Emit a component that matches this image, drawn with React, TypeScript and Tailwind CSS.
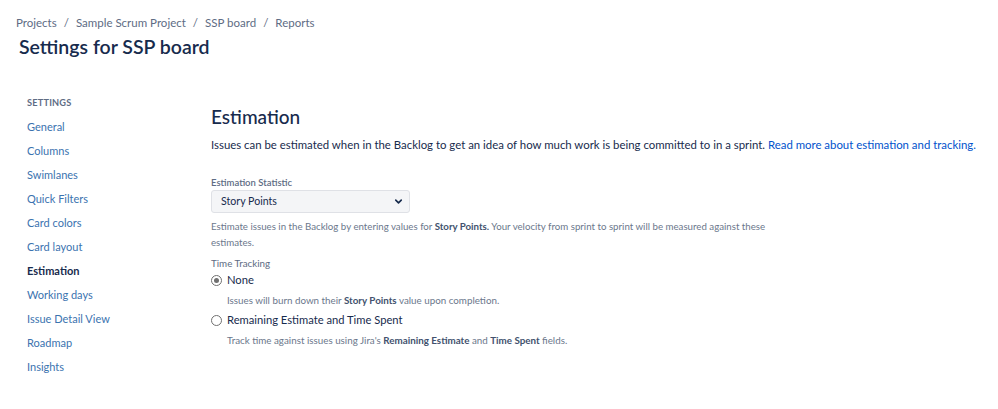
import { ChevronDown } from 'lucide-react';

const navItems = [
  'General',
  'Columns',
  'Swimlanes',
  'Quick Filters',
  'Card colors',
  'Card layout',
  'Estimation',
  'Working days',
  'Issue Detail View',
  'Roadmap',
  'Insights',
];

function Radio({ checked }: { checked?: boolean }) {
  return (
    <span className="w-[11px] h-[11px] rounded-full border border-[#707070] bg-white flex items-center justify-center shrink-0">
      {checked && <span className="w-[5px] h-[5px] rounded-full bg-[#707070]" />}
    </span>
  );
}

export default function App() {
  return (
    <div className="w-[998px] h-[409px] bg-white text-[#172b4d] overflow-hidden" style={{ fontFamily: 'Lato, "Noto Sans", sans-serif' }}>
      {/* Header */}
      <div className="pl-[16px] pt-[15px]">
        <div className="flex items-center text-[11.5px] leading-[16px] text-[#5e6c84]">
          <span>Projects</span>
          <span className="mx-[7px]">/</span>
          <span>Sample Scrum Project</span>
          <span className="mx-[7px]">/</span>
          <span>SSP board</span>
          <span className="mx-[7px]">/</span>
          <span>Reports</span>
        </div>
        <h1 className="pl-[3px] mt-[4px] text-[19.5px] leading-[24px] font-semibold text-[#172b4d]">Settings for SSP board</h1>
      </div>

      <div className="flex mt-[36px]">
        {/* Sidebar */}
        <div className="w-[211px] pl-[27px] shrink-0">
          <div className="text-[9.2px] leading-[16px] font-bold text-[#5e6c84] tracking-[0.2px]">SETTINGS</div>
          <ul className="mt-[4px]">
            {navItems.map((item) => (
              <li
                key={item}
                className={
                  item === 'Estimation'
                    ? 'h-[24px] flex items-center text-[11px] font-bold text-[#172b4d]'
                    : 'h-[24px] flex items-center text-[11px] text-[#3b73af]'
                }
              >
                {item}
              </li>
            ))}
          </ul>
        </div>

        {/* Main */}
        <div className="flex-1 pt-[10px]">
          <h2 className="text-[19px] leading-[24px] font-medium text-[#172b4d]">Estimation</h2>
          <p className="mt-[8px] text-[11.4px] leading-[16px] text-[#172b4d] whitespace-nowrap">
            Issues can be estimated when in the Backlog to get an idea of how much work is being committed to in a sprint.{' '}
            <span className="text-[#0052cc]">Read more about estimation and tracking.</span>
          </p>

          <div className="mt-[23px] text-[9.5px] leading-[14px] text-[#5e6c84] font-semibold">Estimation Statistic</div>
          <div className="w-[199px] h-[23px] rounded-[3px] border border-[#dfe1e6] bg-[#f4f5f7] flex items-center justify-between pl-[9px] pr-[5px] text-[10.6px] text-[#172b4d]">
            <span>Story Points</span>
            <ChevronDown className="w-[11px] h-[11px] text-[#172b4d]" strokeWidth={3.5} />
          </div>
          <p className="mt-[5px] w-[565px] text-[9.7px] leading-[16px] text-[#6b778c]">
            Estimate issues in the Backlog by entering values for <b className="text-[#42526e]">Story Points.</b> Your velocity from sprint to sprint will be measured against these estimates.
          </p>

          <div className="mt-[6px] text-[9.8px] leading-[14px] text-[#5e6c84]">Time Tracking</div>
          <div className="flex items-center h-[20px] text-[11.2px]">
            <Radio checked />
            <span className="ml-[5px]">None</span>
          </div>
          <p className="pl-[16px] text-[9.8px] leading-[20px] text-[#6b778c]">
            Issues will burn down their <b className="text-[#42526e]">Story Points</b> value upon completion.
          </p>
          <div className="flex items-center h-[20px] text-[11.2px]">
            <Radio />
            <span className="ml-[5px]">Remaining Estimate and Time Spent</span>
          </div>
          <p className="pl-[16px] text-[9.8px] leading-[20px] text-[#6b778c]">
            Track time against issues using Jira's <b className="text-[#42526e]">Remaining Estimate</b> and <b className="text-[#42526e]">Time Spent</b> fields.
          </p>
        </div>
      </div>
    </div>
  );
}
